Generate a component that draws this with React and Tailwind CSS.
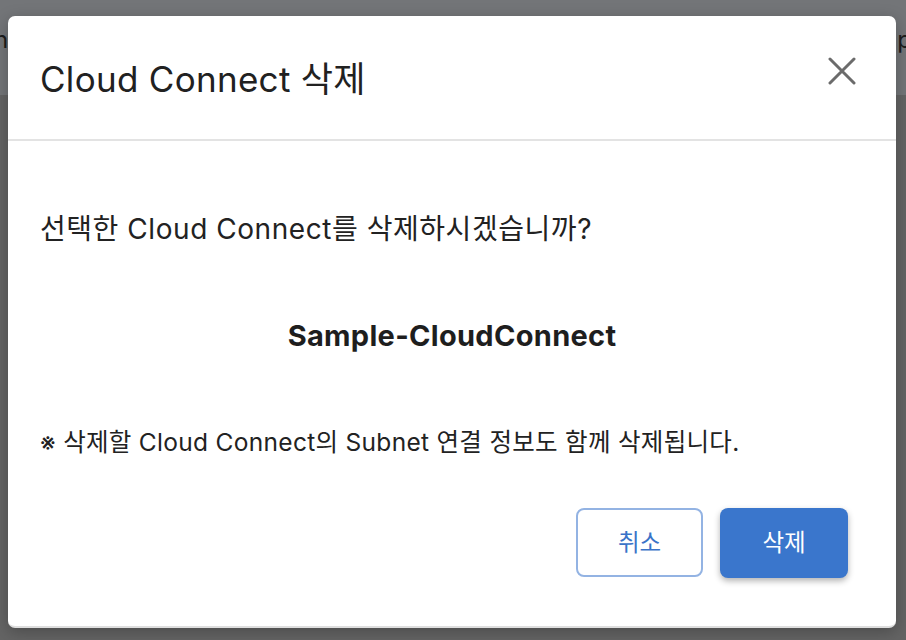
import React from 'react';

const CloseIcon = () => (
  <svg width="28" height="28" viewBox="0 0 28 28" fill="none">
    <path d="M2 2L26 26M26 2L2 26" stroke="#6b6b6b" strokeWidth="3" strokeLinecap="round" />
  </svg>
);

export default function App() {
  return (
    <div className="relative w-[906px] h-[640px] overflow-hidden bg-[#646464] font-['Inter','Noto_Sans_CJK_KR',sans-serif]">
      {/* page behind the overlay */}
      <div className="h-[95px] bg-[#737578] flex items-start pt-[25px] justify-between text-[#1c1c1c] text-[24px] leading-[30px] -mx-[6px]">
        <span>n</span>
        <span>p</span>
      </div>

      <div className="absolute left-[8px] top-[16px] w-[888px] h-[612px] bg-white rounded-[7px] border-b-2 border-[#dedede] shadow-[0_4px_16px_rgba(0,0,0,0.25)] flex flex-col">
        <div className="h-[125px] flex items-center justify-between pl-[32px] pr-[40px] border-b-2 border-[#e3e3e3]">
          <h1 className="text-[35px] leading-[44px] tracking-[0.3px] text-[#212121] pt-[2px]">Cloud Connect 삭제</h1>
          <button className="mt-[-14px]"><CloseIcon /></button>
        </div>

        <div className="flex flex-col px-[32px] text-[#222]">
          <p className="mt-[71px] text-[28px] leading-[34px] tracking-[0.55px]">선택한 Cloud Connect를 삭제하시겠습니까?</p>
          <p className="mt-[73px] text-[29px] leading-[34px] tracking-[0.3px] font-bold text-center text-[#1e1e1e]">Sample-CloudConnect</p>
          <p className="mt-[74px] text-[24.5px] leading-[30px] tracking-[0.3px]">※ 삭제할 Cloud Connect의 Subnet 연결 정보도 함께 삭제됩니다.</p>

          <div className="flex justify-end gap-[17px] mt-[51px] pr-[16px]">
            <button className="w-[127px] h-[69px] rounded-[8px] border-2 border-[#93b3e3] bg-white text-[#3a73c8] text-[23.5px]">취소</button>
            <button className="w-[128px] h-[70px] rounded-[8px] bg-[#3a76cc] text-white text-[23.5px] shadow-[0_3px_6px_rgba(0,0,0,0.3)]">삭제</button>
          </div>
        </div>
      </div>
    </div>
  );
}
